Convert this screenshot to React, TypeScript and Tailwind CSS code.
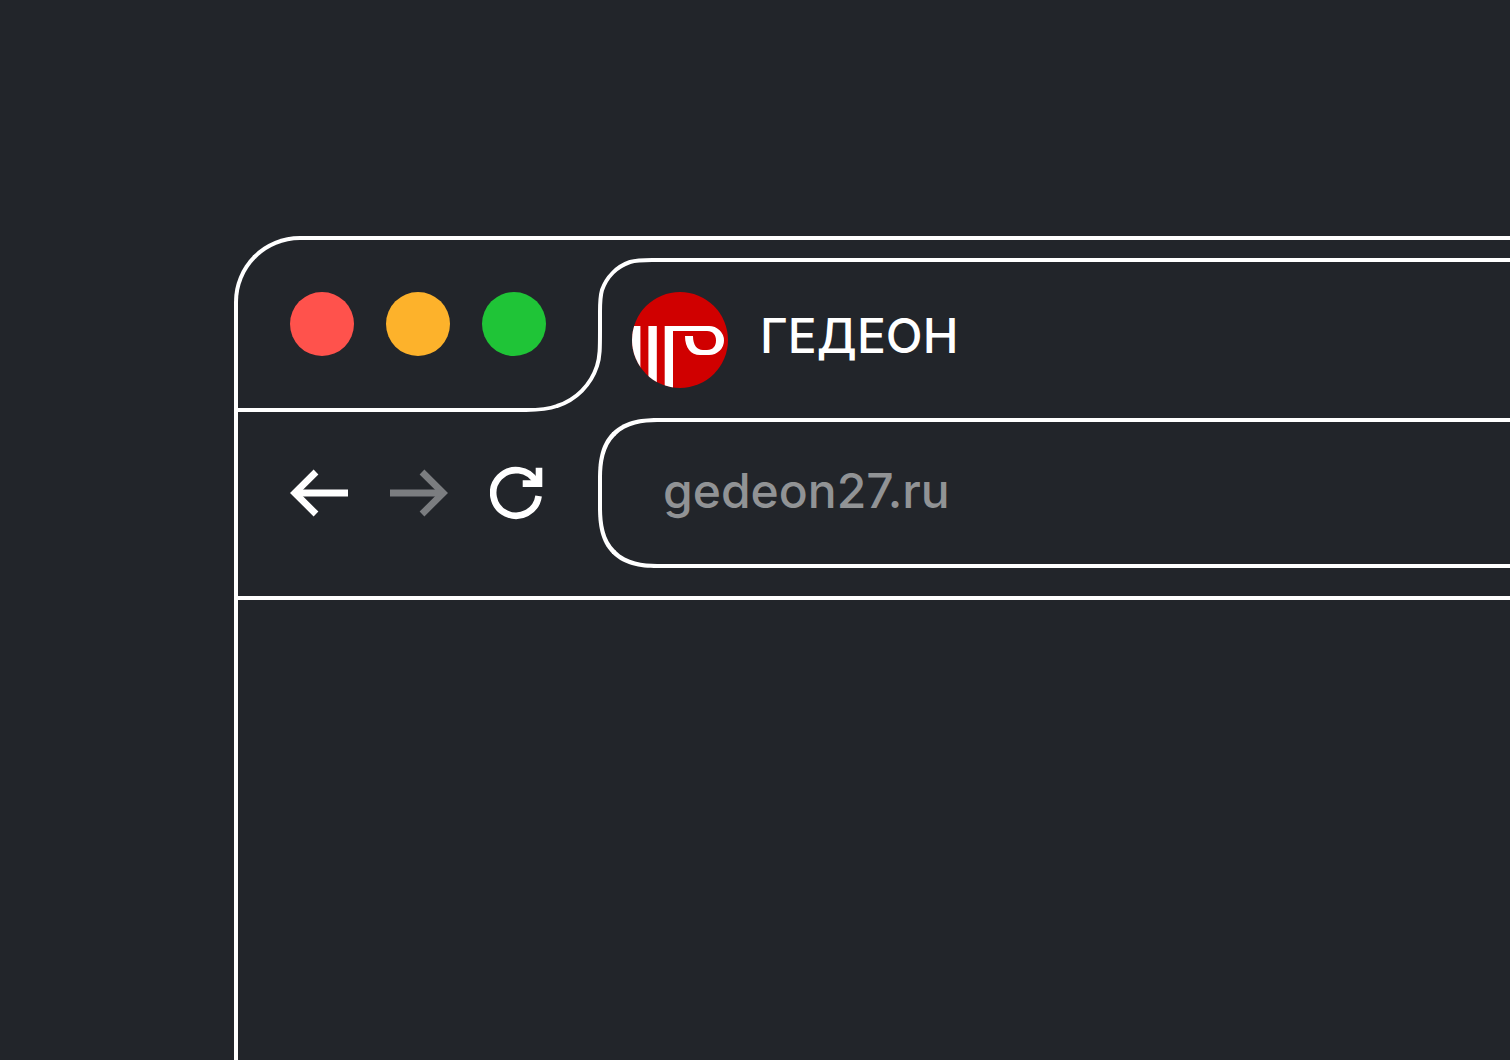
import React from "react";

function WindowButton({ label, className }: { label: string; className: string }) {
  return <button type="button" aria-label={label} className={`size-16 shrink-0 rounded-full ${className}`} />;
}

function Arrow({ className = "" }: { className?: string }) {
  return (
    <svg viewBox="0 0 58 48" className={`h-12 w-[58px] ${className}`} fill="none" stroke="currentColor" aria-hidden="true">
      <path d="M26 3 4.800 24 26 45" strokeWidth="6.8" />
      <path d="M5 24h53" strokeWidth="6.8" />
    </svg>
  );
}

function Reload() {
  return (
    <svg viewBox="0 0 54 54" className="size-[54px]" aria-hidden="true">
      <path d="M48.6 30A22.8 22.8 0 1 1 46 16" fill="none" stroke="currentColor" strokeWidth="6.6" />
      <path d="M45.7 1.7h6.6V21H32.7v-6.7h13z" fill="currentColor" />
    </svg>
  );
}

function Logo() {
  return (
    <svg viewBox="0 0 96 96" className="size-24 shrink-0" aria-hidden="true">
      <defs>
        <clipPath id="logo-circle">
          <circle cx="48" cy="48" r="48" />
        </clipPath>
      </defs>
      <g clipPath="url(#logo-circle)">
        <path fill="#d00000" d="M0 0h96v96H0z" />
        <path fill="#fff" d="M0 34h8.4v62H0zM16.4 34h8.4v62h-8.4zM32.7 34H77a15 14.5 0 0 1 0 29H68C59 63 53 56 53 44h8c0 9 4 14 10 14h4c6 0 9-4 9-9.500S81 39 75 39H41v57h-8.300z" />
      </g>
    </svg>
  );
}

export default function App() {
  return (
    <div className="flex min-h-screen overflow-hidden bg-[#22252a] pt-[236px] pl-[234px] font-['Inter',sans-serif] text-5xl font-medium text-white">
      <main className="min-w-0 flex-1 rounded-tl-[66px] border-t-4 border-l-4 border-white">
        <header className="flex">
          <div className="flex w-72 shrink-0 gap-8 border-b-4 border-white pt-[52px] pl-[52px]">
            <WindowButton label="Закрыть" className="bg-[#ff524c]" />
            <WindowButton label="Свернуть" className="bg-[#fdb22b]" />
            <WindowButton label="Развернуть" className="z-10 bg-[#1fc437]" />
          </div>
          <svg viewBox="0 0 126 172" className="h-[172px] w-[126px] shrink-0" fill="none" stroke="#fff" strokeWidth="4" aria-hidden="true">
            <path d="M0 170C16 170 23 169 31 166A62 62 0 0 0 71 126C74 117 74 108 74 90V72C74 62 74 57 76 50A45.500 45.500 0 0 1 104 22C111 20 116 20 126 20" />
          </svg>
          <div className="mt-[18px] min-w-0 flex-1 border-t-4 border-white pt-[30px]">
            <div className="-ml-5 flex gap-8">
              <Logo />
              <h1 className="leading-[88px]">ГЕДЕОН</h1>
            </div>
          </div>
        </header>
        <nav className="flex border-b-4 border-white pt-1.5 pb-7 pl-[52px]">
          <div className="flex w-[308px] shrink-0 items-center gap-[42px]">
            <button type="button" aria-label="Назад">
              <Arrow />
            </button>
            <button type="button" aria-label="Вперёд" className="text-[#7b7d80]">
              <Arrow className="rotate-180" />
            </button>
            <button type="button" aria-label="Обновить">
              <Reload />
            </button>
          </div>
          <input
            type="text"
            aria-label="Адрес"
            defaultValue="gedeon27.ru"
            className="h-[150px] min-w-0 flex-1 rounded-l-[62px] border-4 border-r-0 border-white bg-transparent pb-1.5 pl-[61px] text-[#919395] outline-none [corner-shape:superellipse(1.4)]"
          />
        </nav>
      </main>
    </div>
  );
}
